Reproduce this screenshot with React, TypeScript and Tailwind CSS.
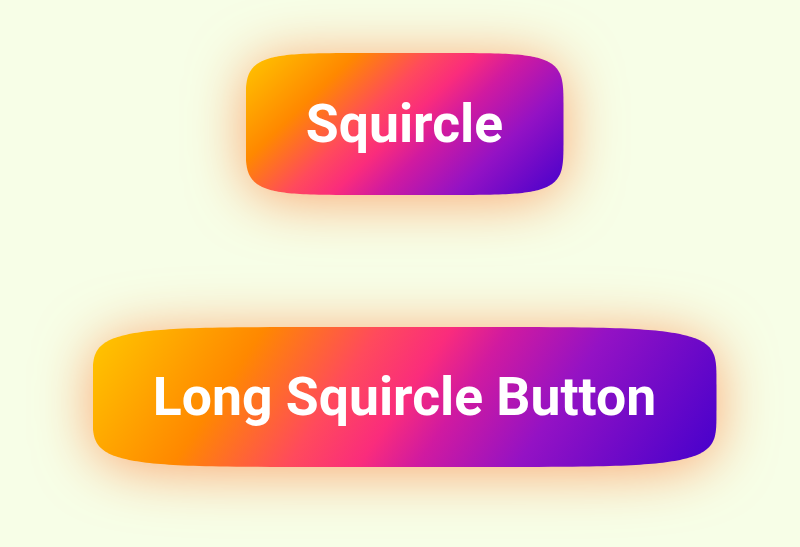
import React from "react";

function superellipsePath(w: number, h: number, n = 6, steps = 240): string {
  const a = w / 2;
  const b = h / 2;
  const pts: string[] = [];
  for (let i = 0; i < steps; i++) {
    const t = (i / steps) * Math.PI * 2;
    const c = Math.cos(t);
    const s = Math.sin(t);
    const x = a + Math.sign(c) * Math.pow(Math.abs(c), 2 / n) * a;
    const y = b + Math.sign(s) * Math.pow(Math.abs(s), 2 / n) * b;
    pts.push(`${x.toFixed(2)} ${y.toFixed(2)}`);
  }
  return `path('M ${pts.join(" L ")} Z')`;
}

function SquircleButton({
  label,
  w,
  h,
  gradientClass,
}: {
  label: string;
  w: number;
  h: number;
  gradientClass: string;
}) {
  return (
    <div className="drop-shadow-[0_5px_28px_rgba(255,115,40,0.62)]">
      <button
        className={`flex items-center justify-center text-white font-bold text-[53.5px] leading-none ${gradientClass}`}
        style={{ width: w, height: h, clipPath: superellipsePath(w, h, 6), fontFamily: "Roboto, 'Liberation Sans', sans-serif" }}
      >
        <span className="pb-[1px]">{label}</span>
      </button>
    </div>
  );
}

export default function App() {
  return (
    <div className="w-[800px] h-[547px] bg-lime-50 flex flex-col items-center pt-[53px] gap-[132px] pl-[9px] overflow-hidden">
      <SquircleButton
        label="Squircle"
        w={318}
        h={142}
        gradientClass="bg-[linear-gradient(136deg,#ffc800_0%,#ff8800_24%,#ff4a5c_40%,#fa2c7c_50%,#d01aa0_60%,#9412c4_76%,#4400cc_100%)]"
      />
      <SquircleButton
        label="Long Squircle Button"
        w={624}
        h={140}
        gradientClass="bg-[linear-gradient(124deg,#ffc800_0%,#ff8800_24%,#ff4a5c_40%,#fa2c7c_50%,#d01aa0_58%,#9412c4_72%,#4400cc_100%)]"
      />
    </div>
  );
}
